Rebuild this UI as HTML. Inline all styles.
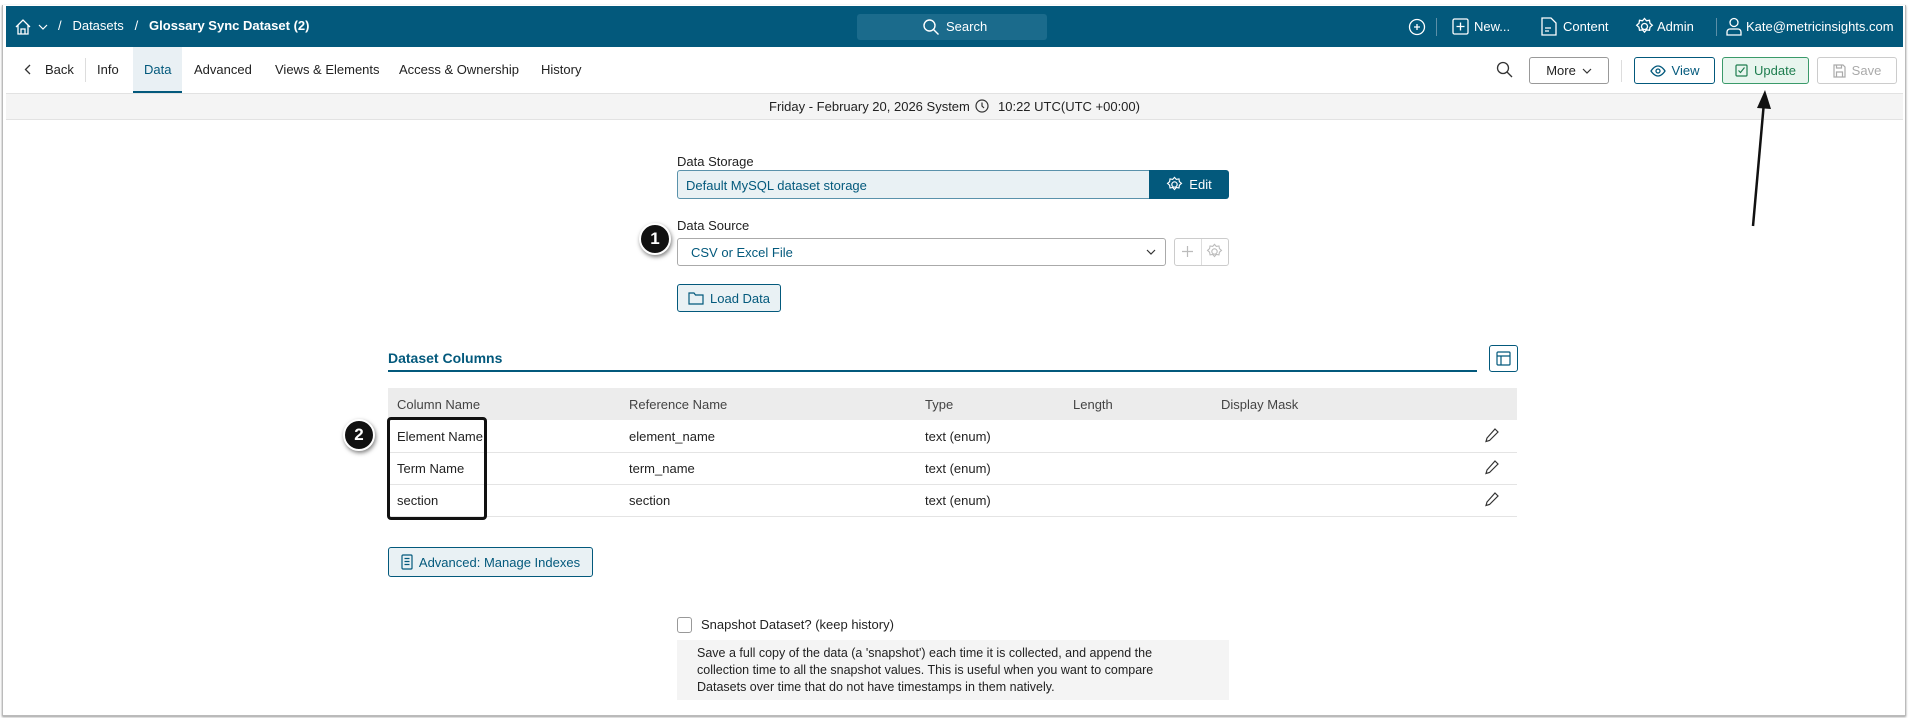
<!DOCTYPE html>
<html><head><meta charset="utf-8"><style>
*{box-sizing:border-box;margin:0;padding:0}
body{width:1909px;height:718px;background:#fff;font-family:"Liberation Sans",sans-serif;font-size:13px;color:#222;position:relative;overflow:hidden}
.a{position:absolute}
.frame{left:2px;top:5px;width:1904px;height:711px;border:1px solid #bbb;border-top:none;box-shadow:0 1px 2px #999}
.top{left:6px;top:6px;width:1897px;height:41px;background:#03597c;color:#fff}
.t{position:absolute;white-space:nowrap}
.btn{position:absolute;border:1px solid #aaa;border-radius:3px;background:#fff;display:flex;align-items:center;justify-content:center;gap:6px;font-size:13px}
svg{display:block}
</style></head><body>
<div class="a frame"></div>
<div class="a top">
 <svg class="a" style="left:8px;top:12px" width="18" height="18" viewBox="0 0 18 18" fill="none" stroke="#fff" stroke-width="1.3"><path d="M2 9L9 2l7 7M4 7v9h10V7M7 16v-5h4v5"/></svg>
 <svg class="a" style="left:32px;top:18px" width="10" height="6" viewBox="0 0 10 6" fill="none" stroke="#fff" stroke-width="1.2"><path d="M1 1l4 4 4-4"/></svg>
 <div class="t" style="left:52px;top:12px;font-size:13px">/&nbsp;&nbsp;&nbsp;Datasets&nbsp;&nbsp;&nbsp;/&nbsp;&nbsp;&nbsp;<b>Glossary Sync Dataset (2)</b></div>
 <div class="a" style="left:851px;top:8px;width:190px;height:26px;background:#1b6b8c;border-radius:3px"></div>
 <svg class="a" style="left:916px;top:12px" width="18" height="18" viewBox="0 0 18 18" fill="none" stroke="#fff" stroke-width="1.4"><circle cx="7.5" cy="7.5" r="5.5"/><path d="M11.5 11.5l5 5"/></svg>
 <div class="t" style="left:940px;top:13px">Search</div>
 <svg class="a" style="left:1402px;top:12px" width="18" height="18" viewBox="0 0 18 18" fill="none" stroke="#fff" stroke-width="1.3"><circle cx="9" cy="9" r="7.5"/><path d="M9 6v6M6 9h6"/></svg>
 <div class="a" style="left:1430px;top:12px;width:1px;height:18px;background:#5c8fa8"></div>
 <svg class="a" style="left:1446px;top:12px" width="17" height="17" viewBox="0 0 17 17" fill="none" stroke="#fff" stroke-width="1.3"><rect x="1" y="1" width="15" height="15" rx="1.5"/><path d="M8.5 4.5v8M4.5 8.5h8"/></svg>
 <div class="t" style="left:1468px;top:13px">New...</div>
 <svg class="a" style="left:1535px;top:11px" width="16" height="19" viewBox="0 0 16 19" fill="none" stroke="#fff" stroke-width="1.3"><path d="M1 1h9l5 5v12H1zM4 11h6M4 14h4"/></svg>
 <div class="t" style="left:1557px;top:13px">Content</div>
 <svg class="a" style="left:1629px;top:11px" width="19" height="19" viewBox="0 0 19 19" fill="none" stroke="#fff" stroke-width="1.3"><circle cx="9.5" cy="9.5" r="3"/><path d="M9.5 1.5l2 2.3 3-.5.5 3 2.3 2-2.3 2-.5 3-3-.5-2 2.3-2-2.3-3 .5-.5-3-2.3-2 2.3-2 .5-3 3 .5z"/></svg>
 <div class="t" style="left:1651px;top:13px">Admin</div>
 <div class="a" style="left:1710px;top:12px;width:1px;height:18px;background:#5c8fa8"></div>
 <svg class="a" style="left:1720px;top:11px" width="16" height="19" viewBox="0 0 16 19" fill="none" stroke="#fff" stroke-width="1.3"><circle cx="8" cy="5.5" r="4"/><path d="M1 18v-3a3 3 0 013-3h8a3 3 0 013 3v3z"/></svg>
 <div class="t" style="left:1740px;top:13px">Kate@metricinsights.com</div>
</div>
<div class="a" style="left:6px;top:47px;width:1897px;height:46px;background:#fff"></div>
<svg class="a" style="left:24px;top:64px" width="7" height="11" viewBox="0 0 7 11" fill="none" stroke="#333" stroke-width="1.3"><path d="M6 1L1.5 5.5 6 10"/></svg>
<div class="t" style="left:45px;top:62px">Back</div>
<div class="a" style="left:85px;top:58px;width:1px;height:24px;background:#ddd"></div>
<div class="t" style="left:97px;top:62px">Info</div>
<div class="a" style="left:133px;top:47px;width:49px;height:46px;background:#e9f0f4;border-bottom:2px solid #03597c"></div>
<div class="t" style="left:144px;top:62px;color:#03597c">Data</div>
<div class="t" style="left:194px;top:62px">Advanced</div>
<div class="t" style="left:275px;top:62px">Views &amp; Elements</div>
<div class="t" style="left:399px;top:62px">Access &amp; Ownership</div>
<div class="t" style="left:541px;top:62px">History</div>
<svg class="a" style="left:1496px;top:61px" width="17" height="17" viewBox="0 0 17 17" fill="none" stroke="#333" stroke-width="1.3"><circle cx="7" cy="7" r="5.5"/><path d="M11 11l5 5"/></svg>
<div class="btn" style="left:1529px;top:57px;width:80px;height:27px;border-color:#999">More <svg width="10" height="6" viewBox="0 0 10 6" fill="none" stroke="#333" stroke-width="1.2"><path d="M1 1l4 4 4-4"/></svg></div>
<div class="a" style="left:1621px;top:60px;width:1px;height:22px;background:#ddd"></div>
<div class="btn" style="left:1634px;top:57px;width:81px;height:27px;border-color:#03597c;color:#03597c"><svg width="16" height="12" viewBox="0 0 16 12" fill="none" stroke="#03597c" stroke-width="1.3"><path d="M1 6s3-5 7-5 7 5 7 5-3 5-7 5-7-5-7-5z"/><circle cx="8" cy="6" r="2"/></svg>View</div>
<div class="btn" style="left:1722px;top:57px;width:87px;height:27px;border-color:#3a9a6a;background:#e8f5ee;color:#1e7d4f"><svg width="13" height="13" viewBox="0 0 13 13" fill="none" stroke="#1e7d4f" stroke-width="1.2"><rect x="1" y="1" width="11" height="11" rx="1"/><path d="M3.5 6.5l2 2 4-5"/></svg>Update</div>
<div class="btn" style="left:1817px;top:57px;width:80px;height:27px;border-color:#ccc;color:#aaa"><svg width="13" height="14" viewBox="0 0 13 14" fill="none" stroke="#aaa" stroke-width="1.2"><path d="M1 1h9l2 2v10H1zM3.5 1v3h5V1M3.5 13V8h6v5"/></svg>Save</div>
<div class="a" style="left:6px;top:93px;width:1897px;height:27px;background:#f4f4f4;border-top:1px solid #e2e2e2;border-bottom:1px solid #e2e2e2"></div>
<div class="t" style="left:769px;top:99px">Friday - February 20, 2026 System</div>
<svg class="a" style="left:975px;top:99px" width="14" height="14" viewBox="0 0 14 14" fill="none" stroke="#333" stroke-width="1.2"><circle cx="7" cy="7" r="6"/><path d="M7 3.5V7l2 2"/></svg>
<div class="t" style="left:998px;top:99px">10:22 UTC(UTC +00:00)</div>
<div class="t" style="left:677px;top:154px">Data Storage</div>
<div class="a" style="left:677px;top:170px;width:474px;height:29px;background:#e9f1f4;border:1px solid #5a92ab;border-radius:3px 0 0 3px"></div>
<div class="t" style="left:686px;top:178px;color:#03597c">Default MySQL dataset storage</div>
<div class="a" style="left:1149px;top:170px;width:80px;height:29px;background:#03597c;border-radius:0 3px 3px 0;color:#fff;display:flex;align-items:center;justify-content:center;gap:6px"><svg width="17" height="17" viewBox="0 0 19 19" fill="none" stroke="#fff" stroke-width="1.3"><circle cx="9.5" cy="9.5" r="3"/><path d="M9.5 1.5l2 2.3 3-.5.5 3 2.3 2-2.3 2-.5 3-3-.5-2 2.3-2-2.3-3 .5-.5-3-2.3-2 2.3-2 .5-3 3 .5z"/></svg>Edit</div>
<div class="t" style="left:677px;top:218px">Data Source</div>
<div class="a" style="left:677px;top:238px;width:489px;height:28px;border:1px solid #aaa;border-radius:3px"></div>
<div class="t" style="left:691px;top:245px;color:#03597c">CSV or Excel File</div>
<svg class="a" style="left:1146px;top:249px" width="10" height="6" viewBox="0 0 10 6" fill="none" stroke="#333" stroke-width="1.2"><path d="M1 1l4 4 4-4"/></svg>
<div class="a" style="left:1174px;top:238px;width:55px;height:28px;border:1px solid #ccc;border-radius:3px"></div>
<div class="a" style="left:1201px;top:239px;width:1px;height:26px;background:#ddd"></div>
<svg class="a" style="left:1181px;top:245px" width="13" height="13" viewBox="0 0 13 13" stroke="#bbb" stroke-width="1.2"><path d="M6.5 1v11M1 6.5h11"/></svg>
<svg class="a" style="left:1206px;top:243px" width="17" height="17" viewBox="0 0 19 19" fill="none" stroke="#bbb" stroke-width="1.2"><circle cx="9.5" cy="9.5" r="3"/><path d="M9.5 1.5l2 2.3 3-.5.5 3 2.3 2-2.3 2-.5 3-3-.5-2 2.3-2-2.3-3 .5-.5-3-2.3-2 2.3-2 .5-3 3 .5z"/></svg>
<div class="a" style="left:639px;top:223px;width:32px;height:32px;border-radius:50%;background:#111;border:2px solid #fff;box-shadow:1px 2px 4px rgba(0,0,0,.5);color:#fff;font-weight:bold;font-size:17px;display:flex;align-items:center;justify-content:center">1</div>
<div class="btn" style="left:677px;top:284px;width:104px;height:28px;background:#e9f1f4;border-color:#03597c;color:#03597c"><svg width="16" height="14" viewBox="0 0 16 14" fill="none" stroke="#03597c" stroke-width="1.2"><path d="M1 2h5l1.5 2H15v9H1z"/></svg>Load Data</div>
<div class="t" style="left:388px;top:350px;font-weight:bold;font-size:14px;color:#03597c">Dataset Columns</div>
<div class="a" style="left:388px;top:370px;width:1089px;height:2px;background:#03597c"></div>
<div class="a" style="left:1489px;top:345px;width:29px;height:27px;border:1px solid #03597c;border-radius:3px"></div>
<svg class="a" style="left:1496px;top:351px" width="15" height="15" viewBox="0 0 15 15" fill="none" stroke="#03597c" stroke-width="1.2"><rect x="1" y="1" width="13" height="13" rx="1"/><path d="M1 5h13M5 5v9"/></svg>
<div class="a" style="left:388px;top:388px;width:1129px;height:32px;background:#ececec"></div>
<div class="t" style="left:397px;top:397px;color:#444">Column Name</div>
<div class="t" style="left:629px;top:397px;color:#444">Reference Name</div>
<div class="t" style="left:925px;top:397px;color:#444">Type</div>
<div class="t" style="left:1073px;top:397px;color:#444">Length</div>
<div class="t" style="left:1221px;top:397px;color:#444">Display Mask</div>
<div class="a" style="left:388px;top:452px;width:1129px;height:1px;background:#e4e4e4"></div>
<div class="a" style="left:388px;top:484px;width:1129px;height:1px;background:#e4e4e4"></div>
<div class="a" style="left:388px;top:516px;width:1129px;height:1px;background:#e4e4e4"></div>
<div class="t" style="left:397px;top:429px">Element Name</div><div class="t" style="left:629px;top:429px">element_name</div><div class="t" style="left:925px;top:429px">text (enum)</div>
<div class="t" style="left:397px;top:461px">Term Name</div><div class="t" style="left:629px;top:461px">term_name</div><div class="t" style="left:925px;top:461px">text (enum)</div>
<div class="t" style="left:397px;top:493px">section</div><div class="t" style="left:629px;top:493px">section</div><div class="t" style="left:925px;top:493px">text (enum)</div>
<svg class="a" style="left:1484px;top:427px" width="16" height="16" viewBox="0 0 16 16" fill="none" stroke="#333" stroke-width="1.2"><path d="M11 2l3 3-8.5 8.5L2 14.5l1-3.5z"/></svg>
<svg class="a" style="left:1484px;top:459px" width="16" height="16" viewBox="0 0 16 16" fill="none" stroke="#333" stroke-width="1.2"><path d="M11 2l3 3-8.5 8.5L2 14.5l1-3.5z"/></svg>
<svg class="a" style="left:1484px;top:491px" width="16" height="16" viewBox="0 0 16 16" fill="none" stroke="#333" stroke-width="1.2"><path d="M11 2l3 3-8.5 8.5L2 14.5l1-3.5z"/></svg>
<div class="a" style="left:387px;top:417px;width:100px;height:103px;border:3px solid #111;border-radius:4px"></div>
<div class="a" style="left:343px;top:419px;width:32px;height:32px;border-radius:50%;background:#111;border:2px solid #fff;box-shadow:1px 2px 4px rgba(0,0,0,.5);color:#fff;font-weight:bold;font-size:17px;display:flex;align-items:center;justify-content:center">2</div>
<div class="btn" style="left:388px;top:547px;width:205px;height:30px;background:#e9f1f4;border-color:#03597c;color:#03597c"><svg width="12" height="16" viewBox="0 0 12 16" fill="none" stroke="#03597c" stroke-width="1.2"><rect x="1" y="1" width="10" height="14" rx="1"/><path d="M3.5 4.5h5M3.5 7.5h5M3.5 10.5h5"/></svg>Advanced: Manage Indexes</div>
<div class="a" style="left:677px;top:617px;width:15px;height:16px;border:1px solid #999;border-radius:3px"></div>
<div class="t" style="left:701px;top:617px">Snapshot Dataset? (keep history)</div>
<div class="a" style="left:677px;top:640px;width:552px;height:60px;background:#f4f4f4"></div>
<div class="a" style="left:697px;top:645px;width:478px;line-height:17px;font-size:12.5px;color:#222">Save a full copy of the data (a 'snapshot') each time it is collected, and append the collection time to all the snapshot values. This is useful when you want to compare Datasets over time that do not have timestamps in them natively.</div>
<svg class="a" style="left:1740px;top:88px" width="40" height="142" viewBox="0 0 40 142"><path d="M13 138L24 14" stroke="#111" stroke-width="2.5"/><path d="M25 2L17 20L31 21z" fill="#111"/></svg>
</body></html>
